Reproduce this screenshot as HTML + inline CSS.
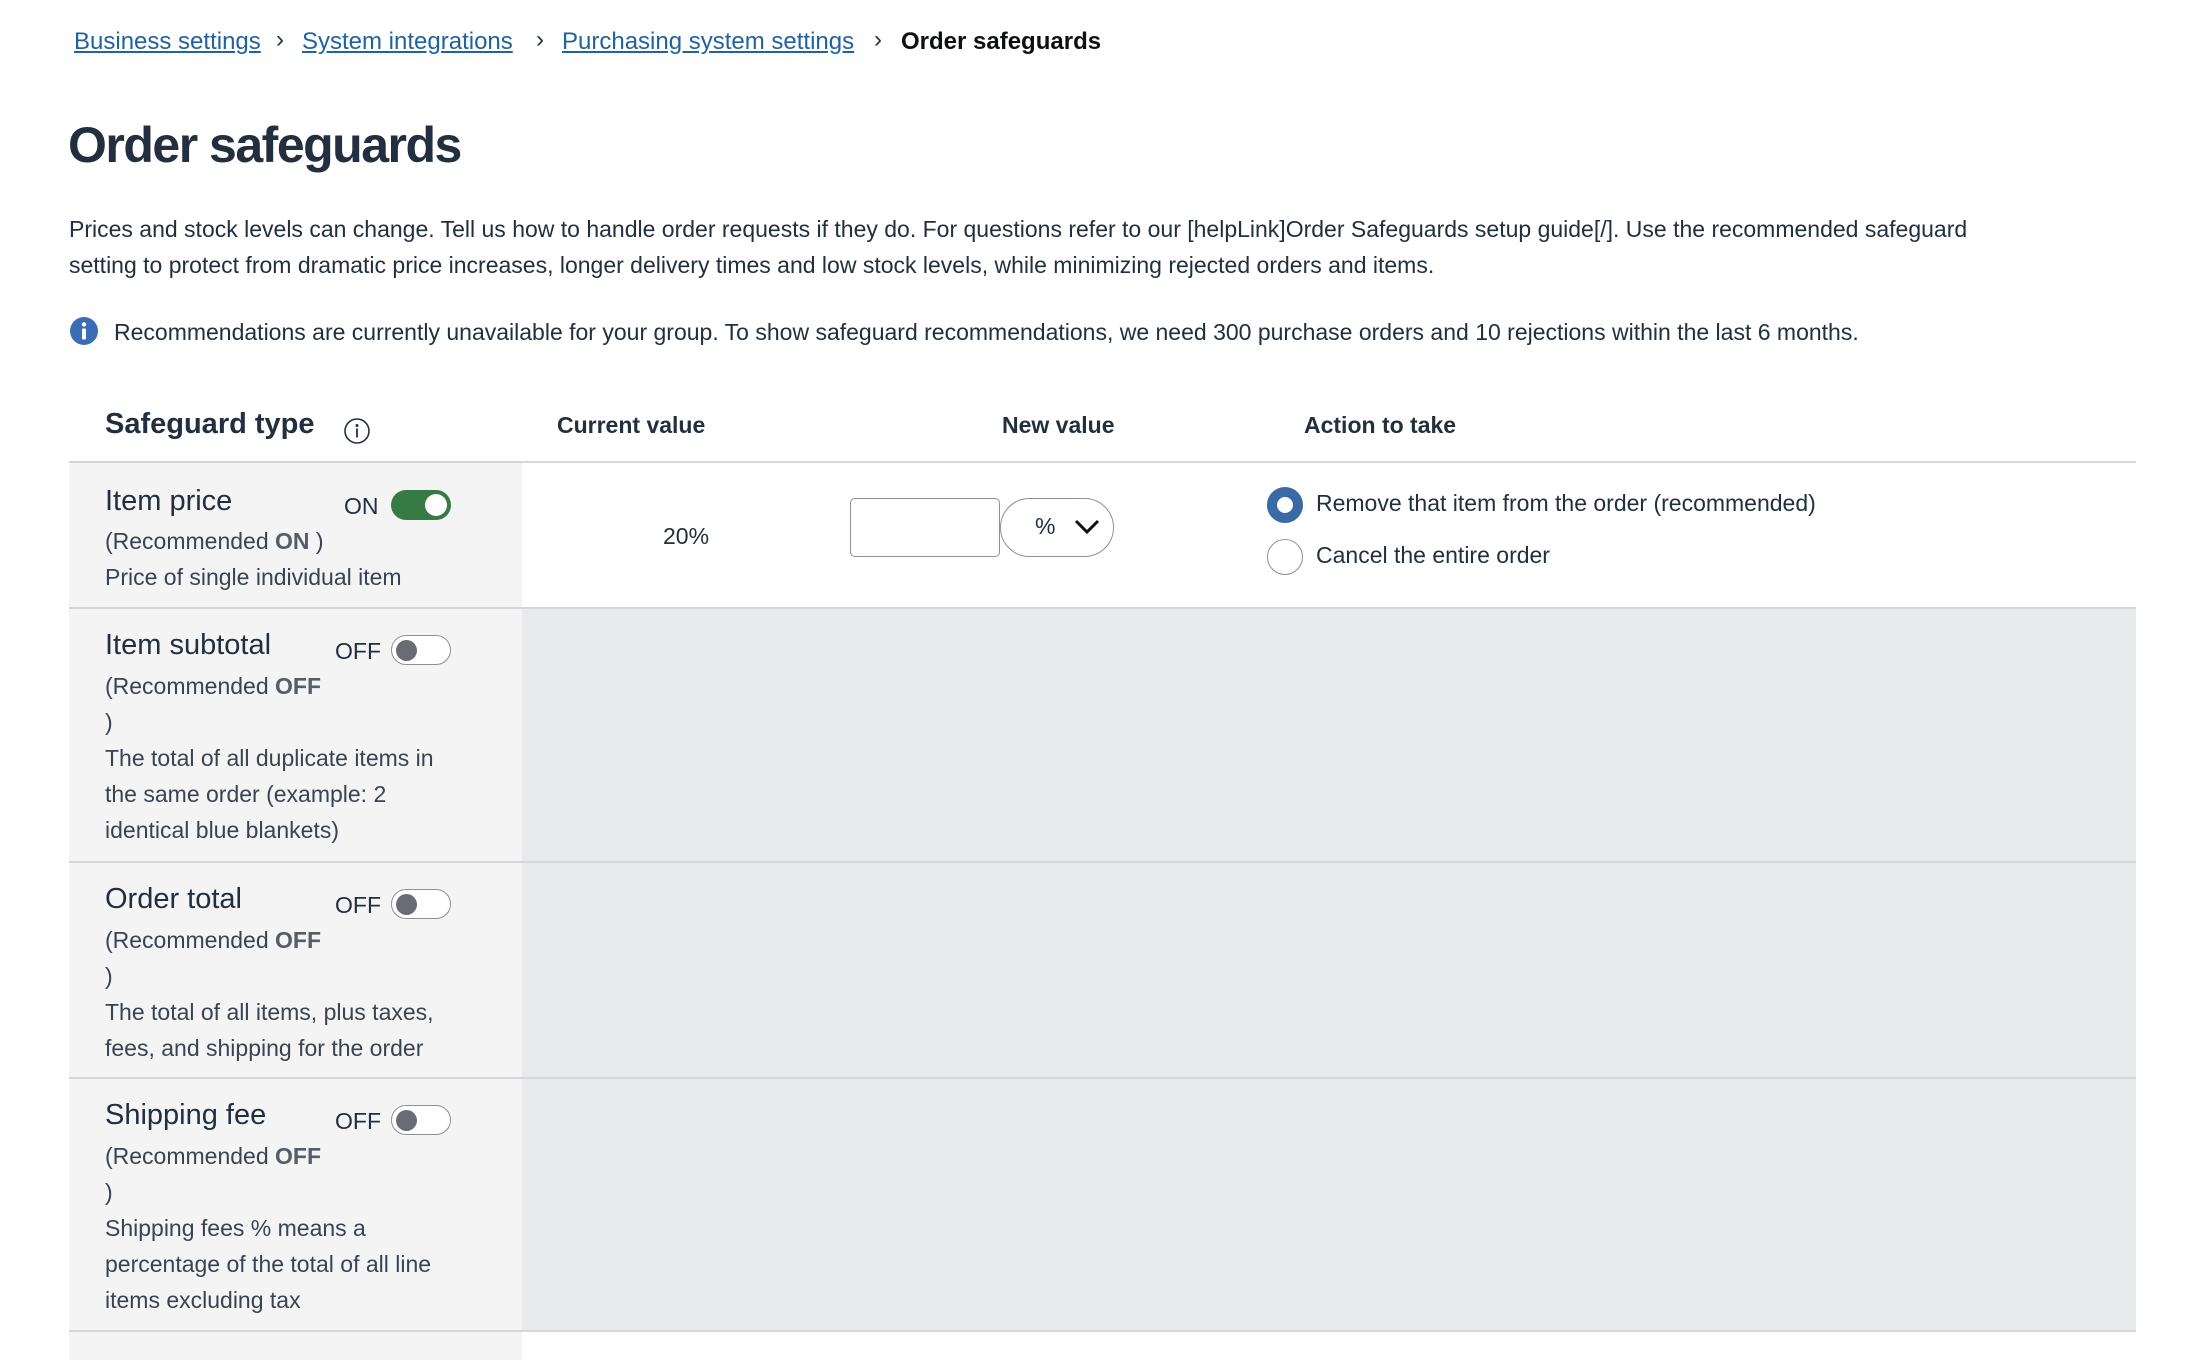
<!DOCTYPE html>
<html><head><meta charset="utf-8">
<style>
*{margin:0;padding:0;box-sizing:border-box}
body{width:2190px;height:1352px;background:#fff;font-family:"Liberation Sans",sans-serif;color:#232f3e;position:relative;overflow:hidden}
.a{position:absolute;white-space:nowrap}
.bc{top:28px;font-size:24px}
.bc a{color:#2162a1;text-decoration:underline}
.chev{font-size:24px}
h1{position:absolute;left:68px;top:116px;font-size:50px;font-weight:bold;letter-spacing:-1.5px;color:#232f3e}
.p{left:69px;font-size:23px;line-height:36px}
.row{position:absolute;left:69px;width:2067px;border-top:2px solid #d5d6da}
.left{position:absolute;left:0;top:0;bottom:0;width:453px;background:#f4f4f4}
.right{position:absolute;left:453px;top:0;bottom:0;right:0;background:#e9eaec}
.name{position:absolute;left:36px;font-size:29px;color:#232f3e}
.sub{position:absolute;left:36px;font-size:23px;line-height:36px;color:#3b4350;white-space:nowrap}
.sub b{color:#565d67}
.lab{position:absolute;font-size:23px;color:#232f3e}
.tog{position:absolute;left:322px;width:60px;height:30px;border-radius:15px}
.tog.on{background:#367a45}
.tog.on::after{content:"";position:absolute;right:4px;top:4px;width:22px;height:22px;border-radius:50%;background:#fff}
.tog.off{background:#fff;border:1.5px solid #8d9096}
.tog.off::after{content:"";position:absolute;left:4px;top:3.5px;width:21px;height:21px;border-radius:50%;background:#6a6b74}
.th{top:412px;font-size:23px;font-weight:bold}
</style></head><body>
<div class="a bc" style="left:74px"><a>Business settings</a></div>
<div class="a chev" style="left:276px;top:26px">&#x203A;</div>
<div class="a bc" style="left:302px"><a>System integrations</a></div>
<div class="a chev" style="left:536px;top:26px">&#x203A;</div>
<div class="a bc" style="left:562px"><a>Purchasing system settings</a></div>
<div class="a chev" style="left:874px;top:26px">&#x203A;</div>
<div class="a bc" style="left:901px;font-weight:bold;color:#0f1111">Order safeguards</div>

<h1>Order safeguards</h1>
<div class="a p" style="top:211px">Prices and stock levels can change. Tell us how to handle order requests if they do. For questions refer to our [helpLink]Order Safeguards setup guide[/]. Use the recommended safeguard</div>
<div class="a p" style="top:247px">setting to protect from dramatic price increases, longer delivery times and low stock levels, while minimizing rejected orders and items.</div>

<svg class="a" style="left:69px;top:316px" width="30" height="30" viewBox="0 0 30 30"><circle cx="15" cy="15" r="14" fill="#3a6db3"/><circle cx="15" cy="8.5" r="2.2" fill="#fff"/><rect x="13" y="12.5" width="4" height="11" rx="1" fill="#fff"/></svg>
<div class="a p" style="left:114px;top:314px">Recommendations are currently unavailable for your group. To show safeguard recommendations, we need 300 purchase orders and 10 rejections within the last 6 months.</div>

<div class="a" style="left:105px;top:408px;font-size:29px;font-weight:bold">Safeguard type</div>
<svg class="a" style="left:343px;top:417px" width="28" height="28" viewBox="0 0 28 28"><circle cx="14" cy="14" r="12" fill="none" stroke="#232f3e" stroke-width="1.6"/><circle cx="14" cy="8.5" r="1.5" fill="#232f3e"/><rect x="13.1" y="11.5" width="1.8" height="9" fill="#232f3e"/></svg>
<div class="a th" style="left:557px">Current value</div>
<div class="a th" style="left:1002px">New value</div>
<div class="a th" style="left:1304px">Action to take</div>

<div class="row" style="top:461px;height:147px">
 <div class="left"></div>
 <div class="right" style="background:#fff"></div>
 <div class="name" style="top:22px">Item price</div>
 <div class="lab" style="left:275px;top:30px">ON</div>
 <div class="tog on" style="top:27px"></div>
 <div class="sub" style="top:60px">(Recommended <b>ON</b> )</div>
 <div class="sub" style="top:96px">Price of single individual item</div>
 <div class="lab" style="left:594px;top:60px">20%</div>
 <div style="position:absolute;left:781px;top:35px;width:150px;height:59px;border:1.5px solid #8d9096;border-radius:5px;background:#fff"></div>
 <div style="position:absolute;left:931px;top:35px;width:114px;height:59px;border:1.5px solid #8d9096;border-radius:30px;background:#fff"></div>
 <div class="lab" style="left:966px;top:50px">%</div>
 <svg style="position:absolute;left:1005px;top:55px" width="26" height="18" viewBox="0 0 26 18"><path d="M2 3 L13 14 L24 3" fill="none" stroke="#0f1111" stroke-width="3"/></svg>
 <div style="position:absolute;left:1198px;top:24px;width:36px;height:36px;border-radius:50%;border:10px solid #3a6aa6;background:#fff"></div>
 <div class="lab" style="left:1247px;top:27px">Remove that item from the order (recommended)</div>
 <div style="position:absolute;left:1198px;top:76px;width:36px;height:36px;border-radius:50%;border:1.5px solid #8d9096;background:#fff"></div>
 <div class="lab" style="left:1247px;top:79px">Cancel the entire order</div>
</div>

<div class="row" style="top:607px;height:255px">
 <div class="left"></div><div class="right"></div>
 <div class="name" style="top:20px">Item subtotal</div>
 <div class="lab" style="left:266px;top:29px">OFF</div>
 <div class="tog off" style="top:26px"></div>
 <div class="sub" style="top:59px">(Recommended <b>OFF</b><br>)<br>The total of all duplicate items in<br>the same order (example: 2<br>identical blue blankets)</div>
</div>

<div class="row" style="top:861px;height:217px">
 <div class="left"></div><div class="right"></div>
 <div class="name" style="top:20px">Order total</div>
 <div class="lab" style="left:266px;top:29px">OFF</div>
 <div class="tog off" style="top:26px"></div>
 <div class="sub" style="top:59px">(Recommended <b>OFF</b><br>)<br>The total of all items, plus taxes,<br>fees, and shipping for the order</div>
</div>

<div class="row" style="top:1077px;height:254px">
 <div class="left"></div><div class="right"></div>
 <div class="name" style="top:20px">Shipping fee</div>
 <div class="lab" style="left:266px;top:29px">OFF</div>
 <div class="tog off" style="top:26px"></div>
 <div class="sub" style="top:59px">(Recommended <b>OFF</b><br>)<br>Shipping fees % means a<br>percentage of the total of all line<br>items excluding tax</div>
</div>

<div class="row" style="top:1330px;height:30px">
 <div class="left"></div>
</div>
</body></html>
